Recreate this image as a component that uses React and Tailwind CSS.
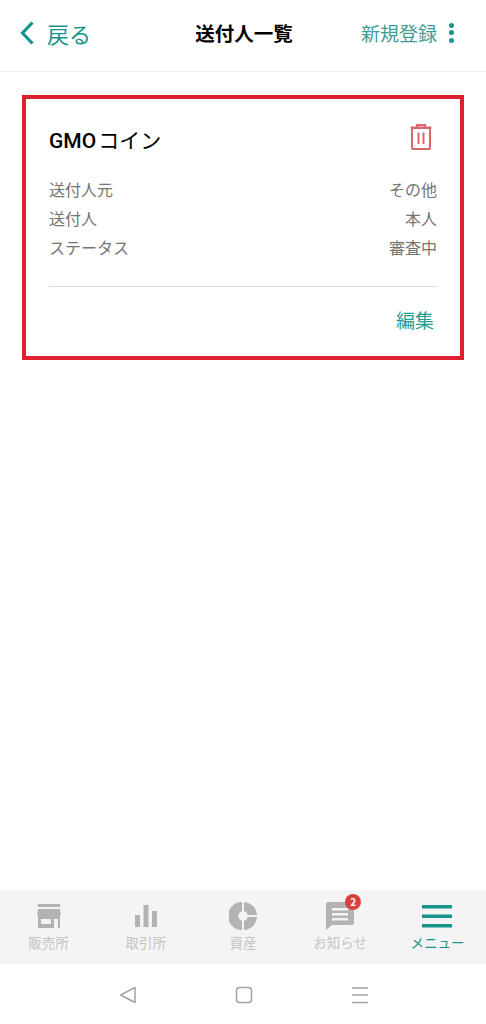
const font = { fontFamily: '"Noto Sans CJK JP", sans-serif' };

const rows = [
    ["送付人元", "その他"],
    ["送付人", "本人"],
    ["ステータス", "審査中"],
];

const StoreIcon = () => (
    <svg width="24" height="24" viewBox="0 0 24 24" fill="#b3b3b3">
        <rect x="1" y="0" width="22" height="3" />
        <path d="M1 5h22l1 6H0z" />
        <path d="M1 11h22v13h-2v-9h-4v9H1zM4 15v5h10v-5z" fillRule="evenodd" />
    </svg>
);

const ChartIcon = () => (
    <svg width="24" height="24" viewBox="0 0 24 24" fill="#b3b3b3">
        <rect x="1" y="11" width="5" height="12" />
        <rect x="9.5" y="1" width="5" height="22" />
        <rect x="18" y="7" width="5" height="16" />
    </svg>
);

const PieIcon = () => (
    <svg width="28" height="28" viewBox="0 0 28 28" fill="#b3b3b3">
        <path d="M13 0V9.2A5 5 0 0 0 13 18.8V28A14 14 0 0 1 13 0z" />
        <path d="M15 0A14 14 0 0 1 28 13H18.8A5 5 0 0 0 15 9.2z" />
        <path d="M18.8 15H28A14 14 0 0 1 15 28V18.8A5 5 0 0 0 18.8 15z" />
    </svg>
);

const MessageIcon = () => (
    <svg width="28" height="28" viewBox="0 0 28 28">
        <path d="M2 0h24a2 2 0 0 1 2 2v19a2 2 0 0 1-2 2H6l-6 5V2a2 2 0 0 1 2-2z" fill="#b3b3b3" />
        <path d="M6 6h16v2.5H6zM6 11h16v2.5H6zM6 16h16v2.5H6z" fill="#f4f4f4" />
    </svg>
);

const MenuIcon = () => (
    <svg width="32" height="24" viewBox="0 0 32 24" fill="#17958a">
        <rect x="1" y="1" width="30" height="3.5" />
        <rect x="1" y="10.5" width="30" height="3.5" />
        <rect x="1" y="20" width="30" height="3.5" />
    </svg>
);

const TrashIcon = () => (
    <svg width="22" height="26" viewBox="0 0 22 26" fill="none" stroke="#d9686c" strokeWidth="2">
        <path d="M0.5 3.5H21.5" />
        <path d="M7 3V1H15V3" />
        <rect x="2" y="4" width="18" height="21" rx="1" />
        <path d="M8.5 8.5V20M13.5 8.5V20" />
    </svg>
);

const tabs = [
    { label: "販売所", icon: <StoreIcon /> },
    { label: "取引所", icon: <ChartIcon /> },
    { label: "資産", icon: <PieIcon /> },
    { label: "お知らせ", icon: <MessageIcon />, badge: 2 },
    { label: "メニュー", icon: <MenuIcon />, active: true },
];

export default function App() {
    return (
        <div className="w-[486px] h-[1024px] bg-white flex flex-col overflow-hidden" style={font}>
            {/* Header */}
            <header className="h-[72px] shrink-0 flex items-center justify-between border-b border-[#ececec] pl-[20px] pr-[32px] pb-[6px]">
                <div className="w-[164px] flex items-center gap-[13px] text-[#17958a]">
                    <svg width="14" height="24" viewBox="0 0 14 24" fill="none" stroke="#17958a" strokeWidth="3.2">
                        <path d="M12.5 1.5L2.5 12L12.5 22.5" />
                    </svg>
                    <span className="text-[22px] leading-none">戻る</span>
                </div>
                <h1 className="text-[19.5px] font-bold text-black leading-none">送付人一覧</h1>
                <div className="w-[150px] flex items-center justify-end gap-[12px] text-[#3f9e94]">
                    <span className="text-[19px] leading-none whitespace-nowrap">新規登録</span>
                    <span className="flex flex-col gap-[2.5px]">
                        <span className="w-[5px] h-[5px] rounded-full bg-[#17958a]" />
                        <span className="w-[5px] h-[5px] rounded-full bg-[#17958a]" />
                        <span className="w-[5px] h-[5px] rounded-full bg-[#17958a]" />
                    </span>
                </div>
            </header>

            {/* Card */}
            <main className="flex-1 px-[22px] pt-[23px]">
                <section className="h-[265px] border-[4px] border-[#e0202f] px-[23px] pt-[23px]">
                    <div className="h-[30px] flex items-center justify-between pr-[5px]">
                        <h2 className="text-[21px] text-black leading-none mt-[6px]">
                            <span className="font-medium font-['Roboto'] mr-[2px]">GMO</span>コイン
                        </h2>
                        <TrashIcon />
                    </div>
                    <dl className="mt-[22px] flex flex-col text-[16px] text-[#757575]">
                        {rows.map(([k, v]) => (
                            <div key={k} className="h-[29px] flex items-center justify-between">
                                <dt>{k}</dt>
                                <dd>{v}</dd>
                            </div>
                        ))}
                    </dl>
                    <div className="mt-[25px] border-t border-[#dddddd]" />
                    <div className="mt-[23px] pr-[3px] text-right text-[19px] leading-none text-[#2a9d92]">編集</div>
                </section>
            </main>

            {/* Bottom tabs */}
            <nav className="h-[74px] shrink-0 bg-[#f4f4f4] grid grid-cols-5">
                {tabs.map((t) => (
                    <div key={t.label} className="flex flex-col items-center pt-[12px]">
                        <div className="relative h-[28px] flex items-center">
                            {t.icon}
                            {t.badge && (
                                <span className="absolute -top-[8px] -right-[7px] w-[16px] h-[16px] rounded-full bg-[#d9413f] text-white text-[10px] font-bold flex items-center justify-center leading-none">
                                    {t.badge}
                                </span>
                            )}
                        </div>
                        <span className={`mt-[3px] text-[13.5px] leading-[18px] whitespace-nowrap ${t.active ? "text-[#17958a]" : "text-[#c4c4c4]"}`}>
                            {t.label}
                        </span>
                    </div>
                ))}
            </nav>

            {/* Android nav bar */}
            <footer className="h-[60px] shrink-0 flex items-center justify-center gap-[98px] pt-[1px] pl-[2px]">
                <svg width="18" height="18" viewBox="0 0 18 18" fill="none" stroke="#a3a3a3" strokeWidth="1.5" strokeLinejoin="round">
                    <path d="M16 1.5V16.5L1.5 9z" />
                </svg>
                <svg width="18" height="18" viewBox="0 0 18 18" fill="none" stroke="#a3a3a3" strokeWidth="1.5">
                    <rect x="1.5" y="1.5" width="15" height="15" rx="3" />
                </svg>
                <svg width="18" height="18" viewBox="0 0 18 18" fill="none" stroke="#a3a3a3" strokeWidth="1.5">
                    <path d="M1 2H17M1 9H17M1 16.5H17" />
                </svg>
            </footer>
        </div>
    );
}
